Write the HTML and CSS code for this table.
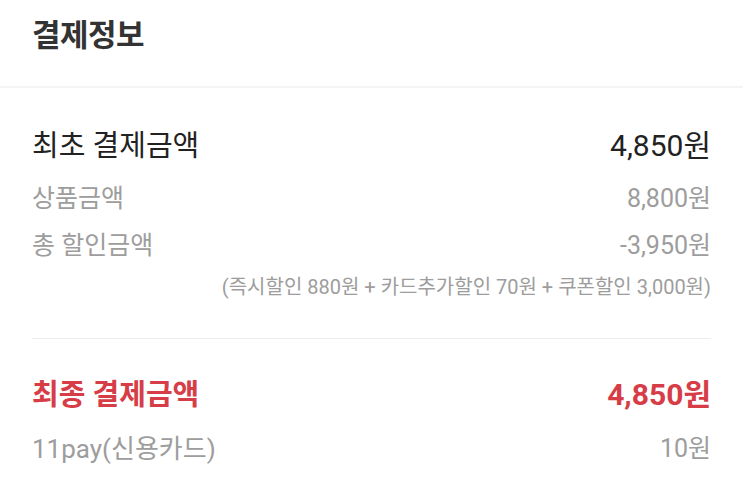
FILE: index.html
```html
<!DOCTYPE html>
<html lang="ko">
<head>
<meta charset="utf-8">
<link rel="stylesheet" href="styles.css">
</head>
<body>
<div class="header"><h1 class="title">결제정보</h1></div>
<div class="band"></div>
<div class="section">
  <div class="row row-main"><span>최초 결제금액</span><span>4,850원</span></div>
  <div class="row row-sub row-goods"><span>상품금액</span><span>8,800원</span></div>
  <div class="row row-sub row-disc"><span>총 할인금액</span><span>-3,950원</span></div>
  <div class="note">(즉시할인 880원 + 카드추가할인 70원 + 쿠폰할인 3,000원)</div>
  <div class="rule"></div>
  <div class="row row-final"><span>최종 결제금액</span><span>4,850원</span></div>
  <div class="row row-sub row-pay"><span>11pay(신용카드)</span><span>10원</span></div>
</div>
</body>
</html>
```
FILE: styles.css
```css
* { box-sizing: border-box; }
html, body { margin: 0; padding: 0; background: #fff; }
body {
  font-family: "Roboto", "Noto Sans CJK KR", sans-serif;
  color: #222;
}
.header {
  height: 86px;
  padding: 13px 32px 0;
}
.title {
  margin: 0;
  font-family: "Noto Sans CJK KR", sans-serif;
  font-size: 31px;
  line-height: 40px;
  font-weight: 700;
  color: #333;
  letter-spacing: -0.5px;
}
.band { height: 2px; background: #f4f4f4; }
.section { padding: 0 32px; }
.row {
  display: flex;
  justify-content: space-between;
  align-items: center;
}
.row-main {
  margin-top: 38px;
  font-size: 29px;
  line-height: 40px;
  color: #222;
}
.row-main span:last-child { font-size: 30px; }
.row-sub {
  font-size: 25px;
  line-height: 34px;
  color: #9d9d9d;
}
.row-goods { margin-top: 16px; }
.row-disc { margin-top: 13px; }
.note {
  margin-top: 10px;
  text-align: right;
  font-size: 20px;
  line-height: 28px;
  color: #9d9d9d;
}
.rule {
  margin-top: 37px;
  height: 1px;
  background: #ededed;
}
.row-final {
  margin-top: 36px;
  font-size: 29px;
  line-height: 40px;
  font-weight: 700;
  color: #d63d47;
}
.row-final span:last-child { font-size: 30px; }
.row-pay { margin-top: 17px; }
.row-pay span:first-child { font-size: 26px; }
```
